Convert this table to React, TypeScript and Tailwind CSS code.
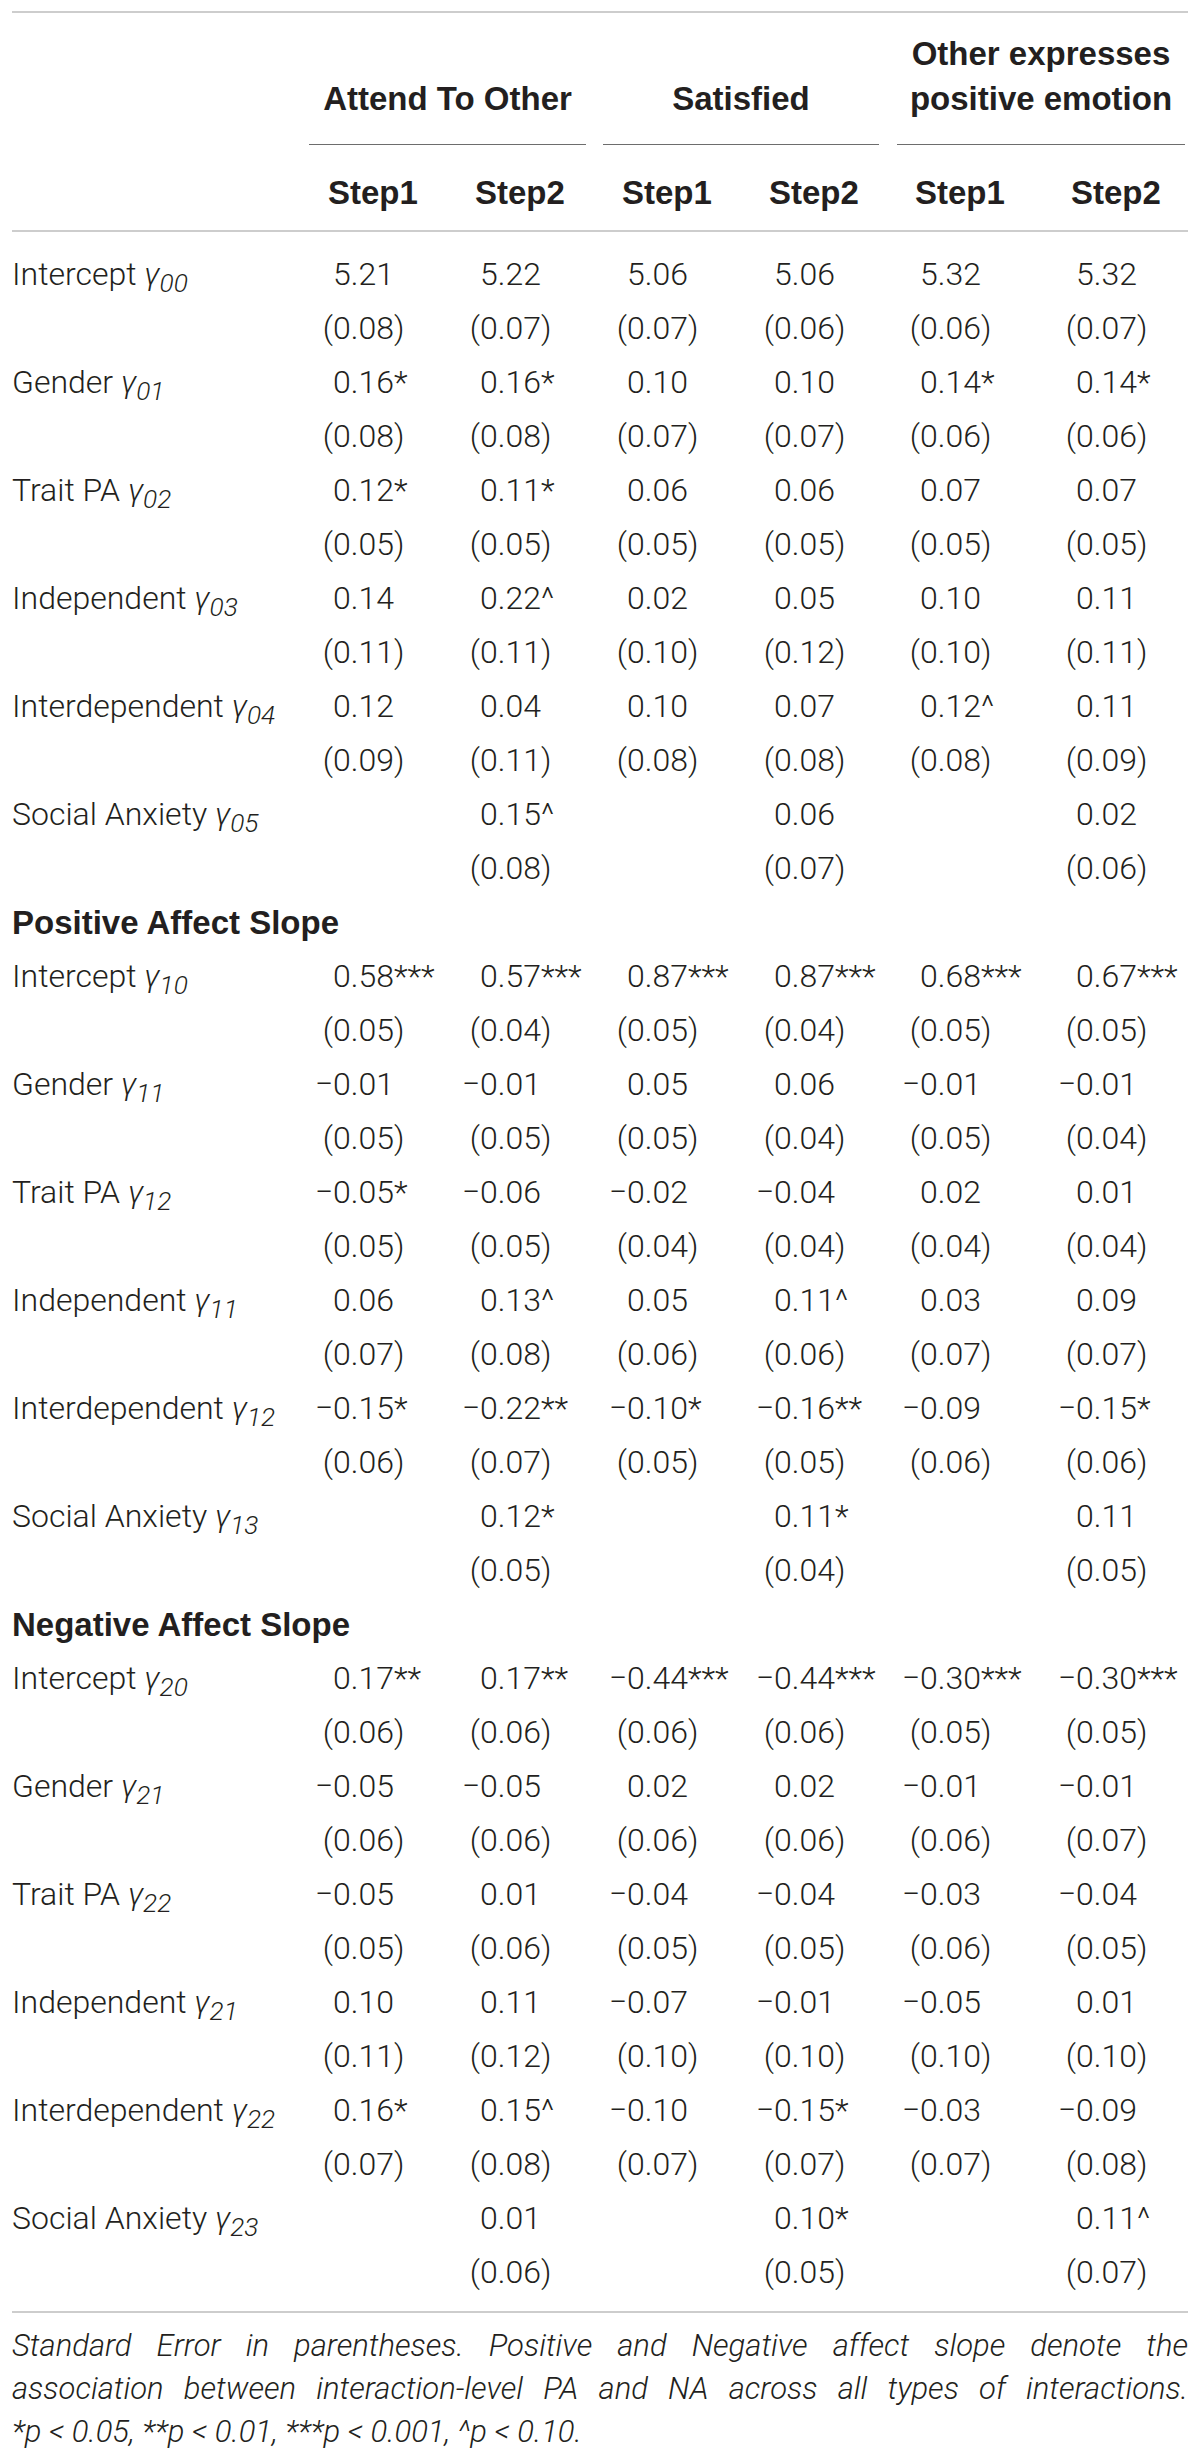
import React from "react"

type Variable = {
  name: string
  sub: string
  est: string[]
  se: string[]
}

type Section = {
  title?: string
  vars: Variable[]
}

const sections: Section[] = [
  {
    vars: [
      { name: "Intercept", sub: "00", est: ["5.21", "5.22", "5.06", "5.06", "5.32", "5.32"], se: ["(0.08)", "(0.07)", "(0.07)", "(0.06)", "(0.06)", "(0.07)"] },
      { name: "Gender", sub: "01", est: ["0.16*", "0.16*", "0.10", "0.10", "0.14*", "0.14*"], se: ["(0.08)", "(0.08)", "(0.07)", "(0.07)", "(0.06)", "(0.06)"] },
      { name: "Trait PA", sub: "02", est: ["0.12*", "0.11*", "0.06", "0.06", "0.07", "0.07"], se: ["(0.05)", "(0.05)", "(0.05)", "(0.05)", "(0.05)", "(0.05)"] },
      { name: "Independent", sub: "03", est: ["0.14", "0.22^", "0.02", "0.05", "0.10", "0.11"], se: ["(0.11)", "(0.11)", "(0.10)", "(0.12)", "(0.10)", "(0.11)"] },
      { name: "Interdependent", sub: "04", est: ["0.12", "0.04", "0.10", "0.07", "0.12^", "0.11"], se: ["(0.09)", "(0.11)", "(0.08)", "(0.08)", "(0.08)", "(0.09)"] },
      { name: "Social Anxiety", sub: "05", est: ["", "0.15^", "", "0.06", "", "0.02"], se: ["", "(0.08)", "", "(0.07)", "", "(0.06)"] },
    ],
  },
  {
    title: "Positive Affect Slope",
    vars: [
      { name: "Intercept", sub: "10", est: ["0.58***", "0.57***", "0.87***", "0.87***", "0.68***", "0.67***"], se: ["(0.05)", "(0.04)", "(0.05)", "(0.04)", "(0.05)", "(0.05)"] },
      { name: "Gender", sub: "11", est: ["−0.01", "−0.01", "0.05", "0.06", "−0.01", "−0.01"], se: ["(0.05)", "(0.05)", "(0.05)", "(0.04)", "(0.05)", "(0.04)"] },
      { name: "Trait PA", sub: "12", est: ["−0.05*", "−0.06", "−0.02", "−0.04", "0.02", "0.01"], se: ["(0.05)", "(0.05)", "(0.04)", "(0.04)", "(0.04)", "(0.04)"] },
      { name: "Independent", sub: "11", est: ["0.06", "0.13^", "0.05", "0.11^", "0.03", "0.09"], se: ["(0.07)", "(0.08)", "(0.06)", "(0.06)", "(0.07)", "(0.07)"] },
      { name: "Interdependent", sub: "12", est: ["−0.15*", "−0.22**", "−0.10*", "−0.16**", "−0.09", "−0.15*"], se: ["(0.06)", "(0.07)", "(0.05)", "(0.05)", "(0.06)", "(0.06)"] },
      { name: "Social Anxiety", sub: "13", est: ["", "0.12*", "", "0.11*", "", "0.11"], se: ["", "(0.05)", "", "(0.04)", "", "(0.05)"] },
    ],
  },
  {
    title: "Negative Affect Slope",
    vars: [
      { name: "Intercept", sub: "20", est: ["0.17**", "0.17**", "−0.44***", "−0.44***", "−0.30***", "−0.30***"], se: ["(0.06)", "(0.06)", "(0.06)", "(0.06)", "(0.05)", "(0.05)"] },
      { name: "Gender", sub: "21", est: ["−0.05", "−0.05", "0.02", "0.02", "−0.01", "−0.01"], se: ["(0.06)", "(0.06)", "(0.06)", "(0.06)", "(0.06)", "(0.07)"] },
      { name: "Trait PA", sub: "22", est: ["−0.05", "0.01", "−0.04", "−0.04", "−0.03", "−0.04"], se: ["(0.05)", "(0.06)", "(0.05)", "(0.05)", "(0.06)", "(0.05)"] },
      { name: "Independent", sub: "21", est: ["0.10", "0.11", "−0.07", "−0.01", "−0.05", "0.01"], se: ["(0.11)", "(0.12)", "(0.10)", "(0.10)", "(0.10)", "(0.10)"] },
      { name: "Interdependent", sub: "22", est: ["0.16*", "0.15^", "−0.10", "−0.15*", "−0.03", "−0.09"], se: ["(0.07)", "(0.08)", "(0.07)", "(0.07)", "(0.07)", "(0.08)"] },
      { name: "Social Anxiety", sub: "23", est: ["", "0.01", "", "0.10*", "", "0.11^"], se: ["", "(0.06)", "", "(0.05)", "", "(0.07)"] },
    ],
  },
]

const gridCols = "grid grid-cols-[301px_147px_147px_147px_146px_156px_132px]"
const bold = "font-['Liberation_Sans',Arial,sans-serif] font-bold text-[33px] leading-[45px]"

// first digit of every value sits on the same x; "(" and "−" hang to the left
function Value({ text }: { text: string }) {
  if (!text) return <div />
  const hasPrefix = text[0] === "(" || text[0] === "−"
  const prefix = hasPrefix ? text[0] : ""
  const rest = hasPrefix ? text.slice(1) : text
  return (
    <div className="flex items-center whitespace-nowrap">
      <span className="w-[20px] shrink-0 text-right">{prefix}</span>
      <span>{rest}</span>
    </div>
  )
}

function Label({ name, sub }: { name: string; sub: string }) {
  return (
    <div className="whitespace-nowrap">
      {name} <i>γ<sub className="text-[82%]">{sub}</sub></i>
    </div>
  )
}

export default function App() {
  return (
    <div className="min-h-[2458px] bg-white text-[#231f20]">
      <div className="mx-[12px] w-[1176px] pt-[11px]">
        <div className="h-[2px] bg-[#cdcdcd]" />

        {/* group titles */}
        <div className={`flex items-stretch pt-[18px] ${bold}`}>
          <div className="w-[297px] shrink-0" />
          <div className="flex w-[277px] shrink-0 items-end justify-center border-b border-[#6d6d6d] pb-[23px] text-center">
            Attend To Other
          </div>
          <div className="w-[17px] shrink-0" />
          <div className="flex w-[276px] shrink-0 items-end justify-center border-b border-[#6d6d6d] pb-[23px] text-center">
            Satisfied
          </div>
          <div className="w-[18px] shrink-0" />
          <div className="flex w-[288px] shrink-0 items-end justify-center border-b border-[#6d6d6d] pb-[23px] text-center">
            Other expresses
            <br />
            positive emotion
          </div>
        </div>

        {/* step row */}
        <div className={`${gridCols} ${bold} pt-[25px] pb-[15px]`}>
          <div />
          {["Step1", "Step2", "Step1", "Step2", "Step1", "Step2"].map((s, i) => (
            <div key={i} className="pl-[15px]">
              {s}
            </div>
          ))}
        </div>
        <div className="h-[2px] bg-[#cdcdcd]" />

        {/* body */}
        <div className="pt-[15px] pb-[12px] font-['Roboto','Liberation_Sans',sans-serif] text-[32px] font-light">
          {sections.map((section, si) => (
            <div key={si}>
              {section.title && (
                <div className={`flex h-[54px] items-center ${bold}`}>{section.title}</div>
              )}
              {section.vars.map((v, vi) => (
                <React.Fragment key={vi}>
                  <div className={`${gridCols} h-[54px] items-center`}>
                    <Label name={v.name} sub={v.sub} />
                    {v.est.map((e, i) => (
                      <Value key={i} text={e} />
                    ))}
                  </div>
                  <div className={`${gridCols} h-[54px] items-center`}>
                    <div />
                    {v.se.map((e, i) => (
                      <Value key={i} text={e} />
                    ))}
                  </div>
                </React.Fragment>
              ))}
            </div>
          ))}
        </div>
        <div className="h-[2px] bg-[#cdcdcd]" />

        {/* footnote */}
        <div className="pt-[11px] font-['Roboto','Liberation_Sans',sans-serif] text-[31px] font-light italic leading-[43px]">
          <div className="whitespace-nowrap text-justify [text-align-last:justify]">
            Standard Error in parentheses. Positive and Negative affect slope denote the
          </div>
          <div className="whitespace-nowrap text-justify [text-align-last:justify]">
            association between interaction-level PA and NA across all types of interactions.
          </div>
          <div className="whitespace-nowrap">
            *p &lt; 0.05, **p &lt; 0.01, ***p &lt; 0.001, ^p &lt; 0.10.
          </div>
        </div>
      </div>
    </div>
  )
}
